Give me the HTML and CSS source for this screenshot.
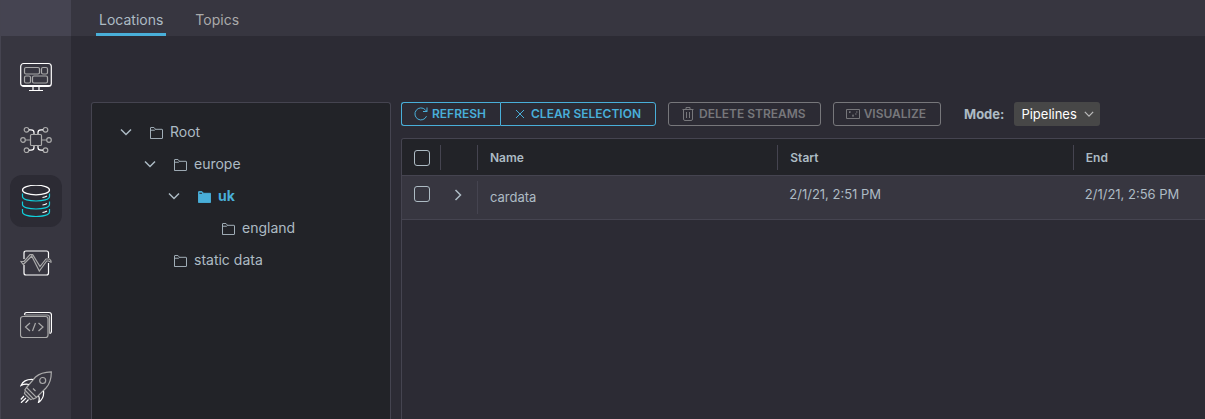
FILE: index.html
```html
<!DOCTYPE html>
<html lang="en">
<head>
<meta charset="utf-8">
<meta name="viewport" content="width=device-width, initial-scale=1">
<title>Locations</title>
<link rel="stylesheet" href="styles.css">
</head>
<body>
<svg class="sprite" aria-hidden="true">
  <symbol id="folder" viewBox="0 0 14 13"><path d="M.5 12.5V1Q.5.5 1 .5H4.2L6 2.5H13Q13.500 2.500 13.500 3V12Q13.500 12.500 13 12.500H1Q.5 12.500.5 12M.5 3.500H5L6 2.500"/></symbol>
  <symbol id="chevron" viewBox="0 0 12 12"><path d="M1 3.500 6 8.500 11 3.500"/></symbol>
</svg>
<div class="app">
  <aside class="sidebar">
    <div class="corner"></div>
    <nav class="side-nav" aria-label="Main">
      <a href="#dashboard" class="side-link" aria-label="Dashboard">
        <svg class="side-icon" viewBox="0 0 32 32"><rect class="hi" x=".7" y="2.500" width="30.600" height="23" rx="3"/><path class="hi" d="M2 24.500H30M9 29.500H23M13 26V29M19 26V29"/><g class="lo"><rect x="4.500" y="6.500" width="15" height="6.500" rx="1.500"/><rect x="21.500" y="6.500" width="6" height="6.500" rx="1.500"/><rect x="4.500" y="15" width="6" height="7" rx="1.500"/><rect x="12.500" y="15" width="15" height="7" rx="1.500"/></g></svg>
      </a>
      <a href="#pipelines" class="side-link" aria-label="Pipelines">
        <svg class="side-icon" viewBox="0 0 32 32"><g class="lo"><rect x="10.500" y="11.500" width="11" height="11" rx="1"/><circle cx="6.500" cy="6.800" r="2.300"/><circle cx="25.500" cy="6.800" r="2.300"/><circle cx="3" cy="17" r="2.300"/><circle cx="29" cy="17" r="2.300"/><circle cx="6.500" cy="27.200" r="2.300"/><circle cx="25.500" cy="27.200" r="2.300"/><path d="M5.300 17H10.500M21.500 17H26.700"/></g><path class="hi" d="M9 6.800H11Q14 6.800 14 9.500V11M23 6.800H21Q18 6.800 18 9.500V11M9 27.200H11Q14 27.200 14 24.500V23M23 27.200H21Q18 27.200 18 24.500V23"/></svg>
      </a>
      <a href="#data" class="side-link side-link-active" aria-label="Data" aria-current="page">
        <svg class="side-icon" viewBox="0 0 32 32"><ellipse class="hi" cx="16" cy="5" rx="13.500" ry="4.800"/><path class="cyan" d="M2.500 8.500V11.500C2.500 17.500 29.500 17.500 29.500 11.500V8.500M2.500 16.500V19.500C2.500 25.500 29.500 25.500 29.500 19.500V16.500M2.500 24V27C2.500 33 29.500 33 29.500 27V24"/><path class="hi" d="M22.500 12.500Q25 12.200 27 11M22.500 20Q25 19.700 27 18.500M22.500 27.500Q25 27.200 27 26"/></svg>
      </a>
      <a href="#analytics" class="side-link" aria-label="Analytics">
        <svg class="side-icon" viewBox="0 0 32 32"><path class="hi" d="M4 12V6Q4 4 6 4H26.500Q28.500 4 28.500 6V11M4 18V26Q4 28 6 28H26.500Q28.500 28 28.500 26V16"/><path class="lo" d="M.5 14 3.300 17.500 11.700 9 19.300 24 26.700 14H28.500L31.500 15.500M.8 14.500 4 14.500 10 7.700H12.700L20 19.500 26 12H29.500L31.500 14.500"/></svg>
      </a>
      <a href="#code" class="side-link" aria-label="Code">
        <svg class="side-icon" viewBox="0 0 32 32"><path class="hi" d="M4.500 6Q4.500 3.500 6.500 3.500H29Q31.500 3.500 31.500 6V22Q31.500 24.500 29.500 24.500"/><rect class="lo" x=".5" y="7.500" width="27.500" height="21" rx="2.500"/><path class="lo" d="M4.500 6H27Q29.500 6 29.500 8V24M10 14 5.500 18 10 22M18.500 14 23 18 18.500 22M15.500 14 12.500 22"/></svg>
      </a>
      <a href="#deploy" class="side-link" aria-label="Deploy">
        <svg class="side-icon" viewBox="0 0 32 32"><path class="lo" d="M31.300.8Q21 1 15.500 6L6.500 16.500 16.500 26.500 26 17Q31.500 11 31.300.8ZM6.500 16.500 4.800 19 13.500 28 16.500 26.500M5 20.500 4.500 22.500 10.500 28.500 12.500 28M13 17.500 15.500 20"/><circle class="lo" cx="22.700" cy="9.500" r="3"/><path class="hi" d="M13 8.500Q4 8 1 14.500 5 12.500 9 13.500M23.500 20Q24.500 27 18.500 31.500 20 27 18.500 25M4 25 .8 28.500M6 27 1 31.800M8.500 28.500 5.500 31.800"/></svg>
      </a>
    </nav>
  </aside>
  <div class="page">
    <nav class="tabs" aria-label="Sections">
      <a href="#locations" class="tab tab-active" aria-current="page">Locations</a>
      <a href="#topics" class="tab">Topics</a>
    </nav>
    <main class="content">
      <section class="tree-panel" aria-label="Locations">
        <ul class="tree">
          <li>
            <div class="node"><button class="caret" aria-label="Collapse Root"><svg class="chevron"><use href="#chevron"/></svg></button><a href="#root" class="node-link"><svg class="folder"><use href="#folder"/></svg>Root</a></div>
            <ul>
              <li>
                <div class="node"><button class="caret" aria-label="Collapse europe"><svg class="chevron"><use href="#chevron"/></svg></button><a href="#europe" class="node-link"><svg class="folder"><use href="#folder"/></svg>europe</a></div>
                <ul>
                  <li>
                    <div class="node"><button class="caret" aria-label="Collapse uk"><svg class="chevron"><use href="#chevron"/></svg></button><a href="#uk" class="node-link node-selected"><svg class="folder" viewBox="0 0 14 13"><path d="M.5 12.500V1Q.5.5 1 .5H4.200L6 2.500H13.500V12.500Z"/><path class="folder-tab" d="M1.500 3H4.500L4 1.800H1.500Z"/></svg>uk</a></div>
                    <ul>
                      <li><div class="node"><span class="caret"></span><a href="#england" class="node-link"><svg class="folder"><use href="#folder"/></svg>england</a></div></li>
                    </ul>
                  </li>
                </ul>
              </li>
              <li><div class="node"><span class="caret"></span><a href="#static" class="node-link"><svg class="folder"><use href="#folder"/></svg>static data</a></div></li>
            </ul>
          </li>
        </ul>
      </section>
      <section class="streams" aria-label="Streams">
        <div class="toolbar">
          <div class="button-group">
            <button class="btn"><svg class="btn-icon" viewBox="0 0 14 14"><path d="M12.500 9.200A6 6 0 1 1 11.300 2.800L13 4.500M13 .5V4.500H9"/></svg>REFRESH</button>
            <button class="btn"><svg class="btn-icon" viewBox="0 0 14 14"><path d="M3 3 11 11M11 3 3 11"/></svg>CLEAR SELECTION</button>
          </div>
          <button class="btn" disabled><svg class="btn-icon" viewBox="0 0 14 14"><path d="M1.500 2.500H12.500M5 2.500V.5H9V2.500M2.500 2.500V12Q2.500 13.500 4 13.500H10Q11.500 13.500 11.500 12V2.500M5.500 5V11M8.500 5V11"/></svg>DELETE STREAMS</button>
          <button class="btn" disabled><svg class="btn-icon" viewBox="0 0 14 14"><path d="M.5 2.500H13.500V11.500H.5ZM3 5H5M6 9H8M7 7.500V9M10 5H11.500M9 7H10.500M3.500 4.500V6"/></svg>VISUALIZE</button>
          <div class="mode">
            <label for="mode">Mode:</label>
            <span class="select"><select id="mode"><option>Pipelines</option><option>Streams</option></select><svg class="select-arrow" viewBox="0 0 12 12"><use href="#chevron"/></svg></span>
          </div>
        </div>
        <div class="grid">
          <table>
            <colgroup><col class="col-check"><col class="col-expand"><col class="col-name"><col class="col-start"><col></colgroup>
            <thead>
              <tr>
                <th><div class="check-cell"><input type="checkbox" aria-label="Select all"></div></th>
                <td><div class="head"></div></td>
                <th scope="col"><div class="head">Name</div></th>
                <th scope="col"><div class="head">Start</div></th>
                <th scope="col"><div class="head">End</div></th>
              </tr>
            </thead>
            <tbody>
              <tr>
                <td><div class="check-cell"><input type="checkbox" aria-label="Select cardata"></div></td>
                <td><button class="expand" aria-label="Expand cardata"><svg class="chevron-right" viewBox="0 0 12 12"><path d="M3.500 1 8.500 6 3.500 11"/></svg></button></td>
                <td><div class="name">cardata</div></td>
                <td class="date">2/1/21, 2:51 PM</td>
                <td class="date">2/1/21, 2:56 PM</td>
              </tr>
            </tbody>
          </table>
        </div>
      </section>
    </main>
  </div>
</div>
</body>
</html>
```
FILE: styles.css
```css
:root {
  --page: #2c2b34;
  --bar: #373640;
  --dark: #222328;
  --line: #454450;
  --text: #adbbc4;
  --accent: #49afd9;
}

* { box-sizing: border-box; }

body {
  margin: 0;
  background: var(--page);
  color: var(--text);
  font-family: Inter, "Open Sans", sans-serif;
  font-size: 14px;
  line-height: 20px;
}

ul { list-style: none; margin: 0; padding: 0; }
a { color: inherit; text-decoration: none; }
button { font: inherit; color: inherit; background: none; border: 0; padding: 0; }
svg { fill: none; stroke: currentColor; flex: none; }

.sprite { position: absolute; width: 0; height: 0; }

.app { display: flex; height: 100vh; overflow: hidden; }

.sidebar {
  flex: none;
  width: 71px;
  background: var(--bar);
  border-left: 1px solid var(--line);
}
.corner { height: 36px; background: #454451; }
.side-nav {
  display: flex;
  flex-direction: column;
  align-items: center;
  gap: 10px;
  padding-top: 15px;
}
.side-link {
  display: flex;
  align-items: center;
  justify-content: center;
  width: 52px;
  height: 52px;
  border-radius: 12px;
}
.side-link-active { background: var(--page); }
.side-icon { width: 32px; height: 32px; stroke-width: 1.2; }
.hi { stroke: #fff; }
.lo { stroke: #aaa; }
.cyan { stroke: #10cfdb; }

.page { flex: 1; min-width: 0; display: flex; flex-direction: column; }

.tabs {
  display: flex;
  gap: 26px;
  height: 36px;
  padding-left: 25px;
  background: var(--bar);
}
.tab { padding: 10px 3px 0; color: #aaa; }
.tab-active { color: var(--text); border-bottom: 3px solid var(--accent); }

.content { flex: 1; display: flex; gap: 10px; padding: 66px 0 0 20px; min-height: 0; }

.tree-panel {
  flex: none;
  width: 300px;
  padding: 13px 0 0 24px;
  background: var(--dark);
  border: 1px solid var(--line);
  border-bottom: 0;
  border-radius: 3px 3px 0 0;
}
.tree ul { padding-left: 24px; }
.node { display: flex; align-items: center; height: 32px; }
.caret { display: flex; width: 34px; padding-left: 4px; }
.chevron { width: 12px; height: 12px; stroke-width: 1.5; }
.node-link { display: flex; align-items: center; gap: 7px; }
.folder { width: 13px; height: 12px; margin-top: 2px; }
.node-selected { color: var(--accent); font-weight: 700; }
.node-selected .folder { fill: var(--accent); }
.node-selected .folder-tab { fill: var(--dark); stroke: none; }

.streams { flex: 1; min-width: 0; display: flex; flex-direction: column; gap: 12px; }

.toolbar { display: flex; gap: 12px; }
.button-group { display: flex; }
.btn {
  display: flex;
  align-items: center;
  gap: 4px;
  height: 24px;
  padding: 0 14px 0 12px;
  border: 1px solid currentColor;
  border-radius: 3px;
  color: var(--accent);
  font-size: 12px;
  font-weight: 600;
  white-space: nowrap;
}
.btn:disabled { color: #77777b; }
.button-group .btn:first-child { border-radius: 3px 0 0 3px; border-right: 0; }
.button-group .btn:last-child { border-radius: 0 3px 3px 0; }
.btn-icon { width: 14px; height: 14px; }

.mode { display: flex; align-items: center; gap: 10px; margin-left: 11px; font-size: 13px; }
.mode label { font-weight: 700; }
.select { position: relative; display: flex; }
.select select {
  appearance: none;
  width: 86px;
  height: 24px;
  padding: 0 20px 0 7px;
  border: 0;
  border-radius: 3px;
  background: #474747;
  color: #fff;
  font: inherit;
}
.select-arrow { position: absolute; right: 6px; top: 7px; width: 10px; height: 10px; color: #bbb; stroke-width: 1.5; pointer-events: none; }

.grid { flex: 1; border: 1px solid var(--line); border-width: 1px 0 0 1px; border-radius: 3px 0 0 0; overflow: hidden; }
table { width: 100%; table-layout: fixed; border-collapse: collapse; }
.col-check { width: 38px; }
.col-expand { width: 37px; }
.col-name { width: 37.4%; }
.col-start { width: 36.8%; }
th, td { padding: 0; text-align: left; vertical-align: top; border-bottom: 1px solid var(--line); }
thead { background: var(--dark); font-size: 12px; }
thead th, thead td { padding: 6px 0 5px; font-weight: 600; }
.head { height: 25px; padding-left: 12px; border-left: 1px solid var(--line); line-height: 25px; }
tbody { background: var(--bar); font-size: 13px; }
tbody td { padding: 5px 0; height: 44px; }
.check-cell { display: flex; padding: 5px 0 0 12px; }
input[type="checkbox"] {
  appearance: none;
  width: 16px;
  height: 16px;
  margin: 0;
  border: 1px solid var(--text);
  border-radius: 3px;
}
input[type="checkbox"]:checked { background: var(--accent); }
.expand { display: flex; padding: 8px 12px; }
.chevron-right { width: 12px; height: 12px; stroke-width: 1.5; }
.name { height: 33px; padding-left: 12px; border-left: 1px solid var(--line); line-height: 33px; }
tbody .date { padding: 8px 0 0 12px; }
```
